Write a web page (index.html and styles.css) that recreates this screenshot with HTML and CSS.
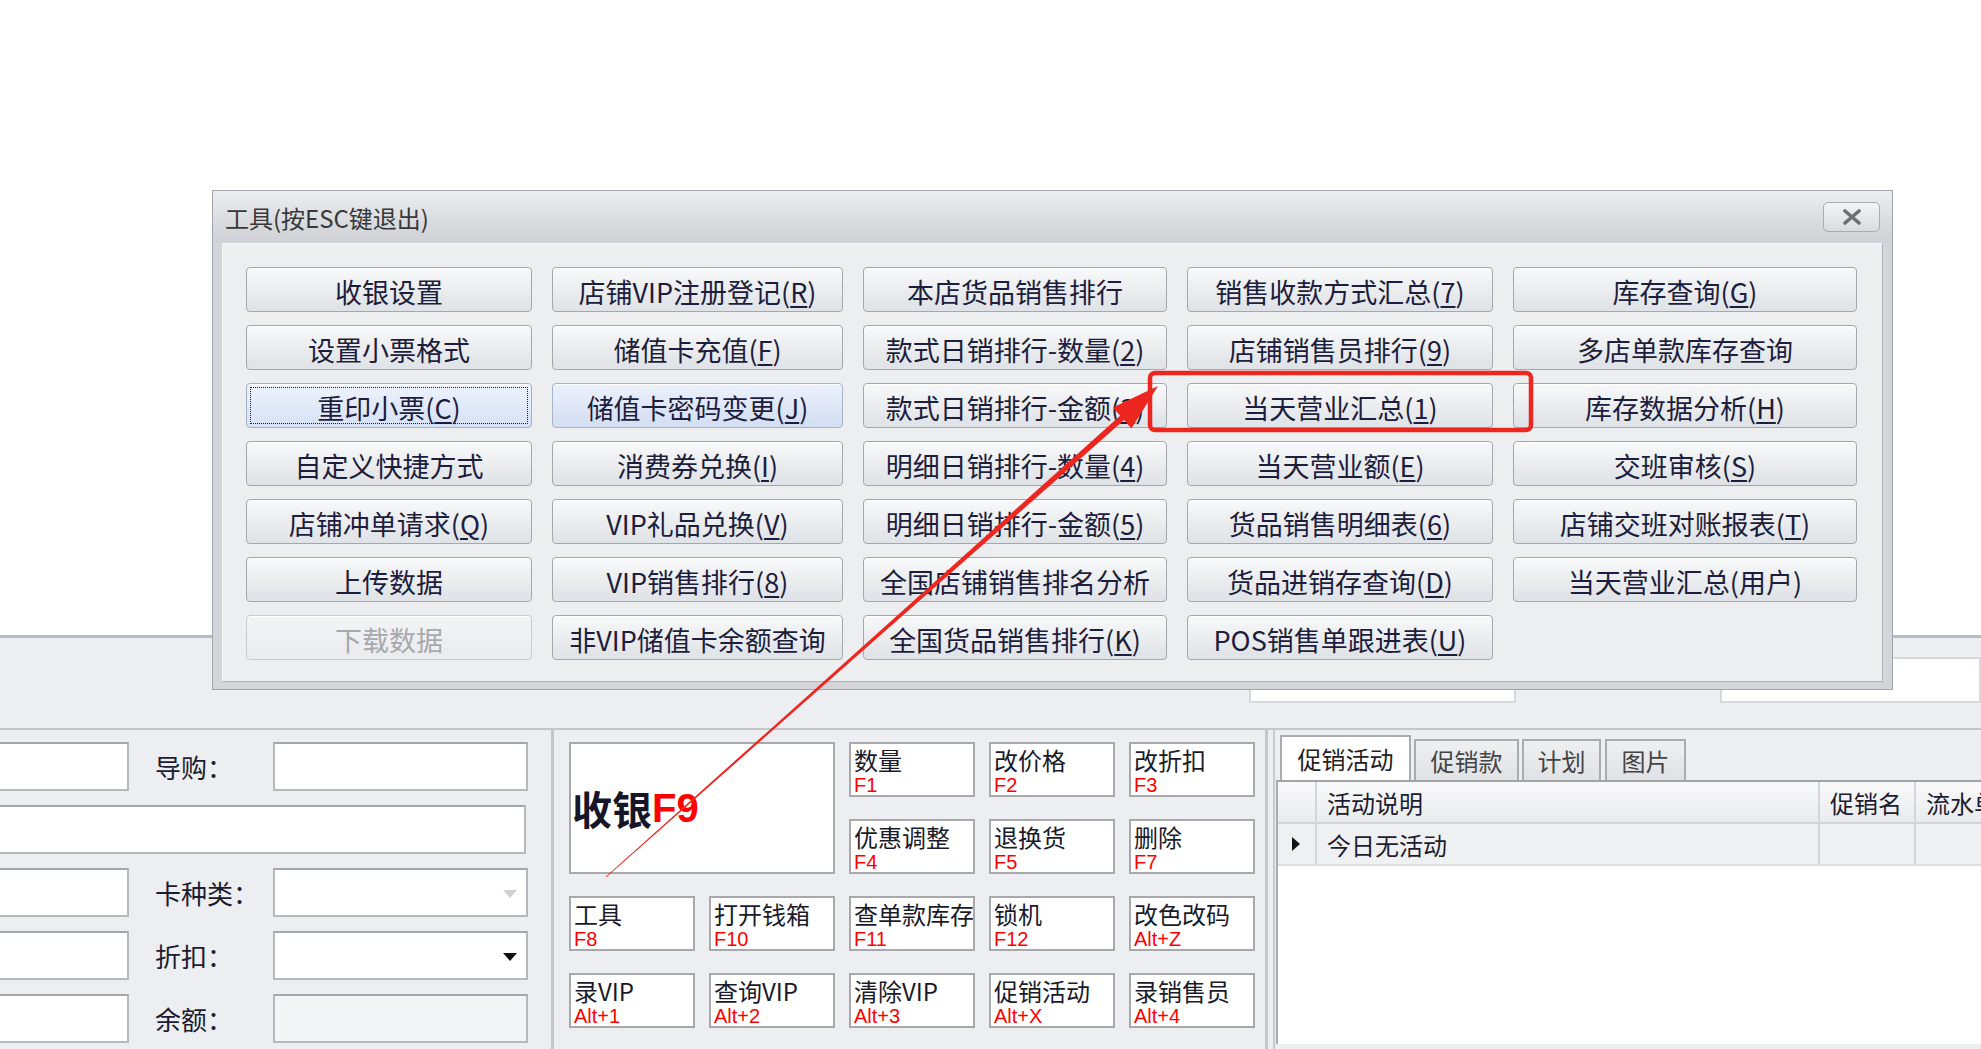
FILE: index.html
```html
<!DOCTYPE html>
<html lang="zh-CN">
<head>
    <meta charset="UTF-8">
    <meta name="viewport" content="width=device-width, initial-scale=1.0">
    <title>收银 - 工具</title>
    <link rel="stylesheet" href="styles.css">
</head>
<body>

    <div class="blank"></div>

    <div class="pos-window">
        <!-- fields hidden behind the dialog -->
        <div class="toolbar">
            <span class="tb-label"></span>
            <div class="tb-input w1"></div>
            <span class="tb-label l2"></span>
            <div class="tb-input w2"></div>
        </div>

        <div class="panels">
            <div class="panel-left">
                <div class="form-row">
                    <div class="field short"></div>
                    <label>导购：</label>
                    <div class="field main"></div>
                </div>
                <div class="form-row">
                    <div class="field wide"></div>
                </div>
                <div class="form-row">
                    <div class="field short"></div>
                    <label>卡种类：</label>
                    <div class="field main"><i class="caret faint"></i></div>
                </div>
                <div class="form-row">
                    <div class="field short"></div>
                    <label>折扣：</label>
                    <div class="field main"><i class="caret"></i></div>
                </div>
                <div class="form-row">
                    <div class="field short"></div>
                    <label>余额：</label>
                    <div class="field main disabled"></div>
                </div>
            </div>

            <div class="panel-keys">
                <div class="key big">收银<b>F9</b></div>
                <div class="key"><span>数量</span><em>F1</em></div>
                <div class="key"><span>改价格</span><em>F2</em></div>
                <div class="key"><span>改折扣</span><em>F3</em></div>
                <div class="key"><span>优惠调整</span><em>F4</em></div>
                <div class="key"><span>退换货</span><em>F5</em></div>
                <div class="key"><span>删除</span><em>F7</em></div>
                <div class="key"><span>工具</span><em>F8</em></div>
                <div class="key"><span>打开钱箱</span><em>F10</em></div>
                <div class="key"><span>查单款库存</span><em>F11</em></div>
                <div class="key"><span>锁机</span><em>F12</em></div>
                <div class="key"><span>改色改码</span><em>Alt+Z</em></div>
                <div class="key"><span>录VIP</span><em>Alt+1</em></div>
                <div class="key"><span>查询VIP</span><em>Alt+2</em></div>
                <div class="key"><span>清除VIP</span><em>Alt+3</em></div>
                <div class="key"><span>促销活动</span><em>Alt+X</em></div>
                <div class="key"><span>录销售员</span><em>Alt+4</em></div>
            </div>

            <div class="panel-promo">
                <div class="tabs">
                    <div class="tab active t1">促销活动</div>
                    <div class="tab t2">促销款</div>
                    <div class="tab t3">计划</div>
                    <div class="tab t4">图片</div>
                </div>
                <div class="grid-box">
                    <table class="promo-grid">
                        <colgroup>
                            <col class="c0">
                            <col class="c1">
                            <col class="c2">
                            <col class="c3">
                        </colgroup>
                        <tr class="head">
                            <td></td>
                            <td>活动说明</td>
                            <td>促销名</td>
                            <td>流水单</td>
                        </tr>
                        <tr class="row">
                            <td><i class="row-mark"></i></td>
                            <td>今日无活动</td>
                            <td></td>
                            <td></td>
                        </tr>
                    </table>
                </div>
            </div>
        </div>
    </div>

    <div class="dialog">
        <div class="dialog-title">
            <span>工具(按ESC键退出)</span>
            <div class="close">
                <svg width="20" height="16" viewBox="0 0 20 16">
                    <path d="M3 2 L17 14 M17 2 L3 14" stroke="#6d6f73" stroke-width="3.6" stroke-linecap="round"/>
                </svg>
            </div>
        </div>
        <div class="dialog-body">
            <div class="btn">收银设置</div>
            <div class="btn">店铺VIP注册登记(<u>R</u>)</div>
            <div class="btn">本店货品销售排行</div>
            <div class="btn">销售收款方式汇总(<u>7</u>)</div>
            <div class="btn">库存查询(<u>G</u>)</div>

            <div class="btn">设置小票格式</div>
            <div class="btn">储值卡充值(<u>F</u>)</div>
            <div class="btn">款式日销排行-数量(<u>2</u>)</div>
            <div class="btn">店铺销售员排行(<u>9</u>)</div>
            <div class="btn">多店单款库存查询</div>

            <div class="btn focused">重印小票(<u>C</u>)</div>
            <div class="btn hover">储值卡密码变更(<u>J</u>)</div>
            <div class="btn">款式日销排行-金额(<u>3</u>)</div>
            <div class="btn">当天营业汇总(<u>1</u>)</div>
            <div class="btn">库存数据分析(<u>H</u>)</div>

            <div class="btn">自定义快捷方式</div>
            <div class="btn">消费券兑换(<u>I</u>)</div>
            <div class="btn">明细日销排行-数量(<u>4</u>)</div>
            <div class="btn">当天营业额(<u>E</u>)</div>
            <div class="btn">交班审核(<u>S</u>)</div>

            <div class="btn">店铺冲单请求(<u>Q</u>)</div>
            <div class="btn">VIP礼品兑换(<u>V</u>)</div>
            <div class="btn">明细日销排行-金额(<u>5</u>)</div>
            <div class="btn">货品销售明细表(<u>6</u>)</div>
            <div class="btn">店铺交班对账报表(<u>T</u>)</div>

            <div class="btn">上传数据</div>
            <div class="btn">VIP销售排行(<u>8</u>)</div>
            <div class="btn">全国店铺销售排名分析</div>
            <div class="btn">货品进销存查询(<u>D</u>)</div>
            <div class="btn">当天营业汇总(用户)</div>

            <div class="btn disabled">下载数据</div>
            <div class="btn">非VIP储值卡余额查询</div>
            <div class="btn">全国货品销售排行(<u>K</u>)</div>
            <div class="btn">POS销售单跟进表(<u>U</u>)</div>
        </div>
    </div>

    <!-- red markup drawn over the screenshot -->
    <svg class="annot" width="1981" height="1049" viewBox="0 0 1981 1049">
        <rect x="1150" y="373" width="381" height="57" rx="5" fill="none" stroke="#ee2620" stroke-width="4.5"/>
        <polygon fill="#ee2620" points="606.3,877.3 1124.1,420.1 1131.4,428.4 1158,386 1112.8,407.4 1120.1,415.7 605.7,876.7"/>
    </svg>

</body>
</html>
```

FILE: styles.css
```css
* {
    box-sizing: border-box;
}

body {
    margin: 0;
    width: 1981px;
    height: 1049px;
    overflow: hidden;
    position: relative;
    background-color: #fff;
    font-family: "Noto Sans CJK SC", sans-serif;
    color: #1c1c30;
}

.blank {
    height: 635px;
}

.pos-window {
    height: 414px;
    border-top: 3px solid #b9bcc2;
    background-color: #eceef1;
}

/* strip that sits behind the dialog */
.toolbar {
    height: 92px;
    display: flex;
    align-items: flex-end;
    padding: 0 0 25px 1037px;
    border-bottom: 2px solid #c4c6cb;
}

.tb-label {
    width: 212px;
    height: 46px;
}

.tb-label.l2 {
    width: 173px;
    margin-left: 31px;
}

.tb-input {
    height: 46px;
    background-color: #fff;
    border: 2px solid #d6d8dc;
}

.tb-input.w1 {
    width: 267px;
}

.tb-input.w2 {
    flex: 1;
}

.panels {
    display: flex;
    height: 319px;
}

/* left: member form */
.panel-left {
    width: 554px;
    border-right: 3px solid #c4c6cb;
    padding-top: 12px;
}

.form-row {
    display: flex;
    align-items: center;
    height: 49px;
    margin-bottom: 14px;
}

.form-row label {
    width: 144px;
    padding-left: 26px;
    font-size: 26px;
    color: #1c1c30;
}

.field {
    position: relative;
    height: 49px;
    background-color: #fff;
    border: 2px solid #b6b8bd;
    border-top-color: #a4a6ab;
}

.field.short {
    width: 131px;
    margin-left: -2px;
}

.field.main {
    width: 255px;
}

.field.wide {
    width: 528px;
    margin-left: -2px;
}

.field.disabled {
    background-color: #f3f4f5;
}

.caret {
    position: absolute;
    right: 9px;
    top: 50%;
    margin-top: -3px;
    border-left: 7px solid transparent;
    border-right: 7px solid transparent;
    border-top: 8px solid #111;
}

.caret.faint {
    border-top-color: #cfd1d4;
}

/* middle: function keys */
.panel-keys {
    width: 714px;
    border-right: 3px solid #c4c6cb;
    padding: 12px 0 0 15px;
    display: grid;
    grid-template-columns: repeat(5, 126px);
    grid-template-rows: repeat(4, 55px);
    gap: 22px 14px;
    align-content: start;
}

.key {
    display: flex;
    flex-direction: column;
    padding: 1px 0 0 3px;
    background-color: #fff;
    border: 2px solid #a9a9ab;
    overflow: hidden;
}

.key span {
    font-size: 24px;
    line-height: 30px;
    color: #1a1a2a;
    white-space: nowrap;
}

.key em {
    font-style: normal;
    font-family: "Liberation Sans", sans-serif;
    font-size: 20px;
    line-height: 20px;
    color: #ff0000;
}

.key.big {
    grid-column: 1 / 3;
    grid-row: 1 / 3;
    flex-direction: row;
    align-items: center;
    padding: 0 0 0 1px;
    font-size: 40px;
    font-weight: bold;
    color: #161628;
}

.key.big b {
    font-family: "Liberation Sans", sans-serif;
    color: #ff0000;
}

/* right: promotions */
.panel-promo {
    flex: 1;
    margin-left: 5px;
    border-left: 2px solid #c8cacf;
    padding-top: 5px;
    overflow: hidden;
}

.tabs {
    display: flex;
    align-items: flex-end;
    gap: 3px;
    height: 45px;
    padding-left: 5px;
}

.tab {
    height: 41px;
    display: flex;
    align-items: center;
    justify-content: center;
    font-size: 24px;
    color: #444;
    border: 2px solid #a9abb0;
    border-bottom: none;
    background: linear-gradient(#eff0f2, #dfe1e5);
}

.tab.active {
    height: 45px;
    background: #fff;
    color: #222;
}

.tab.t1 { width: 131px; }
.tab.t2 { width: 105px; }
.tab.t3 { width: 79px; }
.tab.t4 { width: 81px; margin-left: 1px; }

.grid-box {
    height: 264px;
    margin-left: 1px;
    background-color: #fff;
    border-top: 2px solid #a0a3a8;
    border-left: 2px solid #a8aab0;
}

.promo-grid {
    width: 720px;
    table-layout: fixed;
    border-collapse: collapse;
}

.promo-grid .c0 { width: 38px; }
.promo-grid .c1 { width: 503px; }
.promo-grid .c2 { width: 96px; }
.promo-grid .c3 { width: 83px; }

.promo-grid td {
    padding: 0 0 0 10px;
    font-size: 24px;
    color: #1c1c30;
    white-space: nowrap;
    overflow: hidden;
    border-right: 2px solid #d3d5d8;
}

.promo-grid tr.head td {
    height: 41px;
    background: linear-gradient(#f9f9fa, #eaebed);
    border-bottom: 2px solid #d1d3d6;
}

.promo-grid tr.row td {
    height: 42px;
    background-color: #eff0f2;
    border-bottom: 2px solid #dcdee1;
}

.row-mark {
    display: block;
    margin-left: 4px;
    border-top: 7px solid transparent;
    border-bottom: 7px solid transparent;
    border-left: 8px solid #111;
    width: 0;
}

/* modal tools dialog */
.dialog {
    position: absolute;
    left: 212px;
    top: 190px;
    width: 1681px;
    height: 500px;
    padding: 0 9px 7px;
    border: 1px solid #a2a5ab;
    background-color: #d3d5d9;
}

.dialog-title {
    height: 52px;
    margin: 0 -9px;
    padding: 0 12px 0 12px;
    display: flex;
    align-items: center;
    justify-content: space-between;
    background: linear-gradient(#edeef1, #d9dbdf 60%, #cfd1d6);
    font-size: 24px;
    color: #383838;
}

.close {
    width: 57px;
    height: 30px;
    display: flex;
    align-items: center;
    justify-content: center;
    border: 1px solid #a9acb1;
    border-radius: 5px;
    background: linear-gradient(#f3f4f6, #d9dbdf);
}

.dialog-body {
    height: 439px;
    padding: 23px 0 0 23px;
    background-color: #eceef0;
    border: 1px solid;
    border-color: #f7f8f9 #aeb1b6 #aeb1b6 #f7f8f9;
    display: grid;
    grid-template-columns: 286px 291px 304px 306px 344px;
    grid-template-rows: repeat(7, 45px);
    gap: 13px 20px;
}

.btn {
    display: flex;
    align-items: center;
    justify-content: center;
    padding-top: 3px;
    font-size: 27px;
    color: #1d1d3d;
    white-space: nowrap;
    border: 1px solid #a4a8ae;
    border-radius: 4px;
    background: linear-gradient(#f8f9fa, #eceef0 45%, #dfe2e6);
    box-shadow: inset 0 1px 0 #fff;
}

.btn u {
    text-underline-offset: 3px;
}

.btn.focused {
    background: linear-gradient(#eef3fc, #d6e1f5);
    border-color: #a2b0c8;
    outline: 1px dotted #222;
    outline-offset: -5px;
}

.btn.hover {
    background: linear-gradient(#ecf1fb, #d3def3);
    border-color: #a7b3c6;
}

.btn.disabled {
    color: #a7a9ad;
    border-color: #c9cbce;
    background: linear-gradient(#f3f4f6, #e9ebee);
}

.annot {
    position: absolute;
    left: 0;
    top: 0;
    pointer-events: none;
}
```
